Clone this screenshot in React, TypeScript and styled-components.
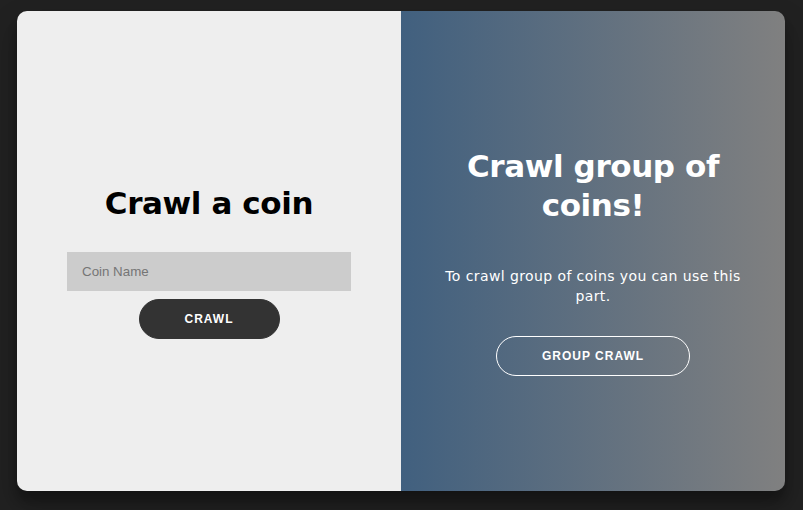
import React from "react";
import styled, { createGlobalStyle } from "styled-components";

const Global = createGlobalStyle`
  * { box-sizing: border-box; }
  html, body { margin: 0; padding: 0; }
  body {
    background: #212121;
    font-family: "DejaVu Sans", "Liberation Sans", sans-serif;
    height: 510px;
    overflow: hidden;
  }
`;

const Page = styled.div`
  display: flex;
  justify-content: center;
  padding: 11px 1px 0 0;
`;

const Card = styled.div`
  width: 768px;
  height: 480px;
  display: grid;
  grid-template-columns: 1fr 1fr;
  border-radius: 10px;
  overflow: hidden;
  box-shadow: 0 14px 28px rgba(0, 0, 0, 0.25), 0 10px 10px rgba(0, 0, 0, 0.22);
`;

const Panel = styled.div<{ $overlay?: boolean }>`
  display: flex;
  flex-direction: column;
  align-items: center;
  justify-content: center;
  text-align: center;
  padding: 20px ${(p) => (p.$overlay ? "40px" : "50px")} 0;
  background: ${(p) =>
    p.$overlay ? "linear-gradient(to right, #41607f, #808080)" : "#eeeeee"};
  color: ${(p) => (p.$overlay ? "#ffffff" : "#000000")};
`;

const Title = styled.h1<{ $gap: number }>`
  margin: 0 0 ${(p) => p.$gap}px;
  font-family: "DejaVu Sans", sans-serif;
  font-weight: 700;
  font-size: 31px;
  line-height: 39px;
  letter-spacing: -0.4px;
`;

const Text = styled.p`
  margin: 0 0 30px;
  font-family: "DejaVu Sans", sans-serif;
  font-size: 14px;
  line-height: 20px;
  letter-spacing: 0.4px;
  font-weight: 400;
`;

const Input = styled.input`
  width: 100%;
  height: 39px;
  margin: 0 0 8px;
  padding: 12px 15px;
  border: none;
  outline: none;
  background: #cccccc;
  font-family: "Liberation Sans", Arial, sans-serif;
  font-size: 13.33px;
  color: #333;
  &::placeholder { color: #757575; }
`;

const Button = styled.button<{ $ghost?: boolean }>`
  height: 40px;
  padding: 0 45px;
  border-radius: 20px;
  border: 1px solid ${(p) => (p.$ghost ? "#ffffff" : "#333333")};
  background: ${(p) => (p.$ghost ? "transparent" : "#333333")};
  color: #ffffff;
  font-family: "Liberation Sans", Arial, sans-serif;
  font-size: 12px;
  font-weight: 700;
  letter-spacing: 1px;
  text-transform: uppercase;
  cursor: pointer;
`;

export default function App() {
  return (
    <>
      <Global />
      <Page>
        <Card>
          <Panel>
            <Title $gap={29}>Crawl a coin</Title>
            <Input placeholder="Coin Name" />
            <Button>Crawl</Button>
          </Panel>
          <Panel $overlay>
            <Title $gap={41}>Crawl group of coins!</Title>
            <Text>To crawl group of coins you can use this part.</Text>
            <Button $ghost>Group Crawl</Button>
          </Panel>
        </Card>
      </Page>
    </>
  );
}
